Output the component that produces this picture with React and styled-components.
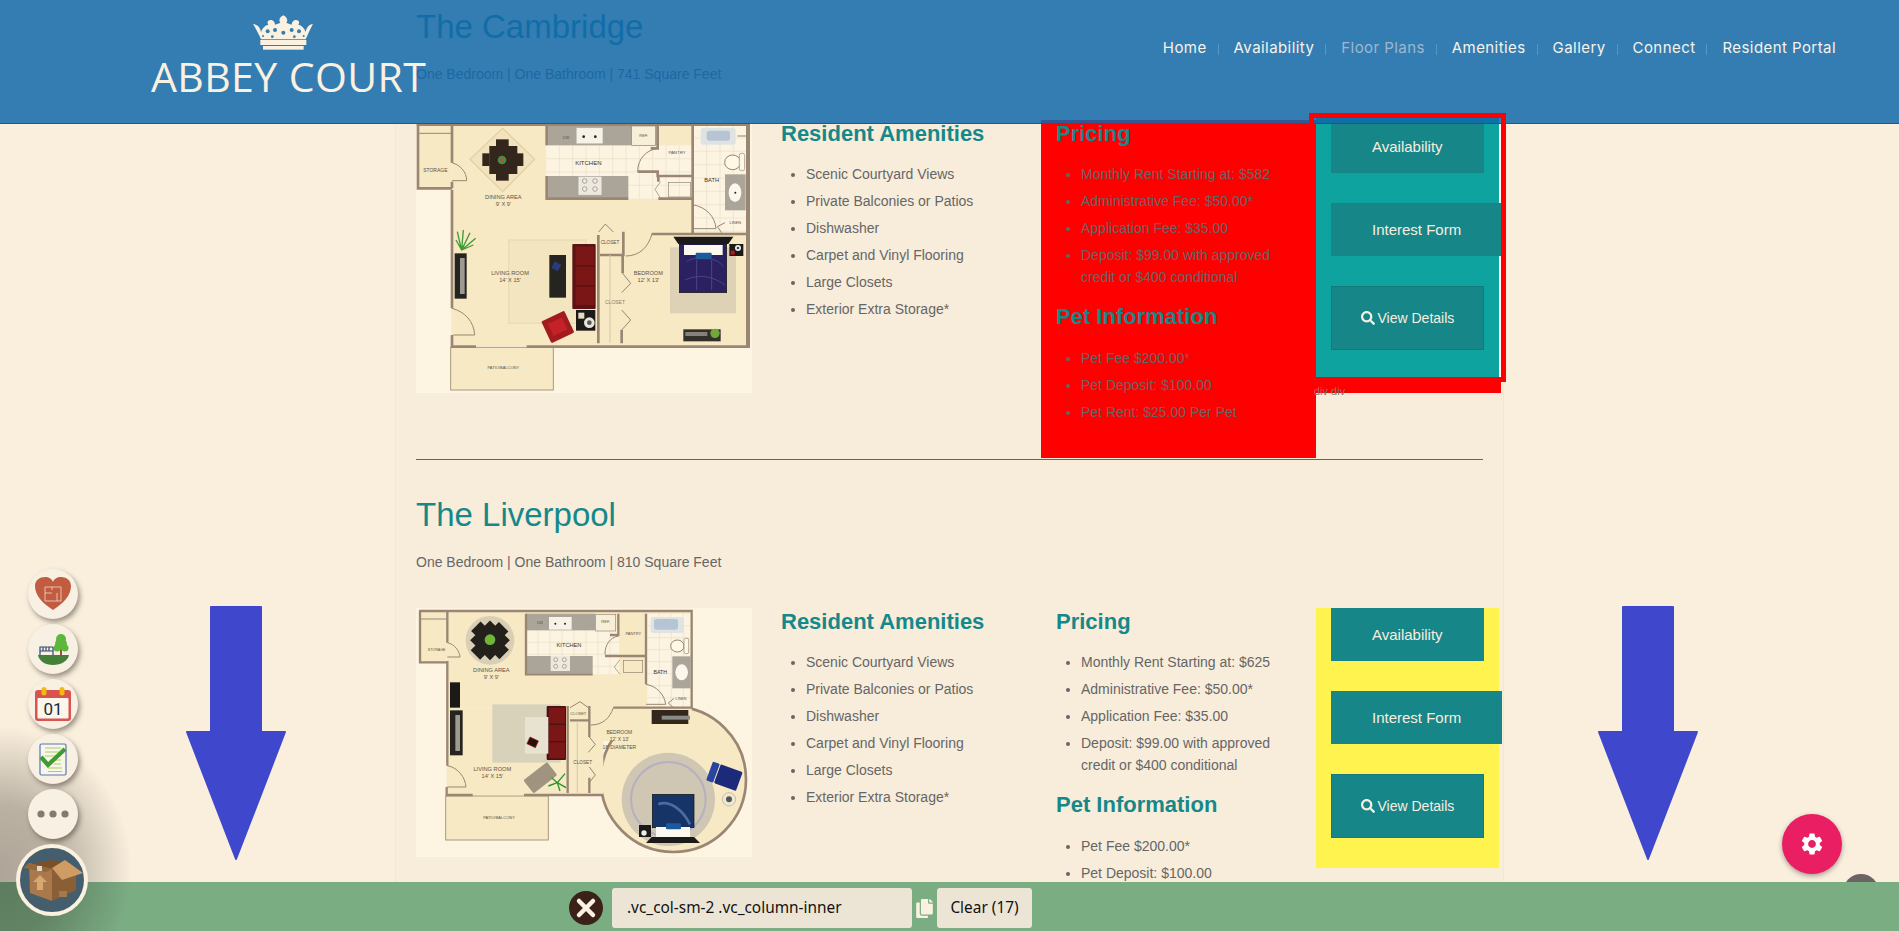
import React from 'react';
import styled, { createGlobalStyle } from 'styled-components';
import { FaSearch, FaCopy } from 'react-icons/fa';
import { MdSettings } from 'react-icons/md';

const Global = createGlobalStyle`
  html, body { margin: 0; padding: 0; height: 100%; overflow: hidden; background: #faefdd; }
  * { box-sizing: border-box; }
  body { font-family: "Liberation Sans", Arial, sans-serif; color: #666; }
`;

const Page = styled.div`position: relative; width: 1899px; height: 931px; overflow: hidden;`;

const Header = styled.header`
  position: absolute; top: 0; left: 0; right: 0; height: 124px; z-index: 5;
  background: rgba(16, 104, 171, 0.85);
  border-bottom: 1px solid rgba(10, 90, 160, 0.9);
  display: flex; justify-content: space-between; align-items: flex-start;
  padding: 15px 63px 0 151px;
`;
const Logo = styled.a`display: flex; flex-direction: column; align-items: flex-start;`;
const Crown = styled.svg`width: 60px; height: 35px; margin-left: 102px; display: block;`;
const LogoText = styled.span`
  font-family: "Open Sans", sans-serif; font-size: 41px; font-weight: 500; line-height: 44px; margin-top: 4px;
  color: #faf1e0; white-space: nowrap; letter-spacing: 0.4px;
`;
const Nav = styled.nav`display: flex; align-items: center; padding-top: 22px;`;
const NavLink = styled.a`
  font-family: "Inter", sans-serif; font-size: 15px; line-height: 22px; white-space: nowrap;
  letter-spacing: 0.43px;
  color: ${p => (p.$active ? '#9db8cf' : '#f7f3ea')};
`;
const NavSep = styled.i`display: block; width: 1px; height: 11px; margin: 2px 15px 0 11px; background: rgba(255,255,255,.18);`;

const Content = styled.main`
  margin-left: 395px; width: 1109px; height: 931px; padding: 7px 0 0 5px;
  background: #f8eddb; border-left: 1px solid #f3e7d4; border-right: 1px solid #f3e7d4;
`;
const Section = styled.section``;
const Title = styled.h2`margin: 0 0 16px 15px; font-size: 33px; line-height: 40px; font-weight: 400; color: #15888a;`;
const Sub = styled.p`margin: 0 0 35px 15px; font-size: 14px; line-height: 22px; color: #666;`;
const Row = styled.div`display: grid; grid-template-columns: 365px 275px 275px 183px; align-items: stretch;`;
const PlanCol = styled.div`padding-left: 15px;`;
const TextCol = styled.div`padding: 0 15px 30px 15px; background: ${p => p.$bg || 'transparent'};`;
const Heading = styled.h3`
  margin: ${p => (p.$next ? '15px 0 16px' : '0 0 15px')}; font-size: 22px; line-height: 28px; font-weight: 700; color: #15888a;
`;
const List = styled.ul`margin: 0; padding: 0 0 0 25px;`;
const Item = styled.li`font-size: 14px; line-height: 22px; margin-bottom: 5px; color: #666;`;
const Rule = styled.hr`margin: 1px 20px 35px 15px; border: 0; height: 1px; background: #15888a;`;

const RedFrame = styled.div`
  position: relative; align-self: start; margin-top: -2px; width: 185px; background: #ff0000; padding-bottom: 11px;
`;
const WhiteEdge = styled.div`background: #fff; padding: 0 2px 2px 0;`;
const ButtonStack = styled.div`
  display: flex; flex-direction: column; align-items: flex-start; gap: 30px;
  align-self: start; background: ${p => p.$bg}; padding: ${p => p.$top || 0}px 0 30px 15px;
`;
const Button = styled.a`
  display: flex; align-items: center; justify-content: center; gap: 3px; flex: none; white-space: nowrap;
  height: ${p => (p.$tall ? 64 : 53)}px; padding: 0 ${p => (p.$tall ? 28.5 : 41)}px;
  background: #168688; color: #f8eee0; font-size: ${p => (p.$tall ? 14 : 15)}px;
  border: ${p => (p.$tall ? '1px solid #137a7c' : '0')};
`;
const DivLabel = styled.span`position: absolute; left: -2px; bottom: -5px; font-size: 11px; line-height: 13px; color: #777;`;
const Outline = styled.div`
  position: absolute; left: 1309px; top: 113px; width: 197px; height: 269px; border: 5px solid #ff0000; z-index: 6; pointer-events: none;
`;
const PlanSvg = styled.svg`display: block; width: 336px;`;

const ArrowSvg = styled.svg`position: absolute; top: 606px; left: ${p => p.$left}px; width: 100px; height: 254px; z-index: 3;`;

const Shade = styled.div`
  position: absolute; left: 0; bottom: 0; width: 135px; height: 205px; z-index: 8;
  background: radial-gradient(132px 145px at 0 145px, rgba(40,35,30,.36), rgba(40,35,30,.3) 45%, rgba(40,35,30,0) 100%);
`;
const Dock = styled.div`
  position: absolute; left: 28px; top: 569px; z-index: 9; display: flex; flex-direction: column; gap: 5px;
`;
const DockBtn = styled.div`
  width: 50px; height: 50px; border-radius: 50%; background: #f7f0e3; box-shadow: 2px 3px 5px rgba(60,50,40,.5);
  svg { display: block; width: 50px; height: 50px; }
`;
const BoxBtn = styled.div`
  position: absolute; left: 16px; top: 844px; width: 72px; height: 72px; border-radius: 50%; z-index: 9;
  background: #455e6e; border: 4px solid #faf1e0; overflow: hidden;
  svg { display: block; width: 64px; height: 64px; }
`;
const Fab = styled.div`
  position: absolute; left: 1782px; top: 814px; width: 60px; height: 60px; border-radius: 50%; z-index: 9;
  background: #e91e63; color: #fff; display: flex; align-items: center; justify-content: center;
  box-shadow: 0 2px 5px rgba(0,0,0,.35);
`;
const TopBtn = styled.div`
  position: absolute; left: 1843px; top: 874px; width: 36px; height: 36px; border-radius: 50%; background: #6a6464; z-index: 6;
`;
const Bar = styled.div`
  position: absolute; left: 0; right: 0; bottom: 0; height: 49px; background: #7bad83; z-index: 7;
  display: flex; align-items: center; padding: 6px 0 3px 569px;
`;
const CloseBtn = styled.span`width: 34px; height: 34px; margin-right: 9px; border-radius: 50%; background: #3a2219; flex: none;
  svg { display: block; width: 34px; height: 34px; }`;
const Selector = styled.div`
  width: 300px; height: 40px; background: #ece5d5; border-radius: 3px; padding-left: 15px; color: #111;
  font-family: "Noto Sans", sans-serif; font-size: 15.4px; line-height: 40px;
`;
const CopyIcon = styled.span`width: 25px; display: flex; justify-content: center; color: #faf1e0; font-size: 19px;`;
const ClearBtn = styled.div`
  width: 95px; height: 40px; background: #ece5d5; border-radius: 3px; text-align: center; color: #111;
  font-family: "Noto Sans", sans-serif; font-size: 15.4px; line-height: 40px;
`;

const L = ({ x, y, s = 14, c = '#5e5344', a = 'middle', children }) => (
  <text x={x} y={y} fontSize={s} fill={c} textAnchor={a} fontFamily="Liberation Sans, sans-serif">{children}</text>
);

const WALL = '#9a8672';
const FLOOR = '#f6e9c4';
const TILE = '#fcf4e1';
const GRANITE = '#aaa598';

const Grid = ({ x, y, w, h, step = 40 }) => {
  const lines = [];
  for (let i = x + step; i < x + w; i += step) lines.push(<line key={'v' + i} x1={i} y1={y} x2={i} y2={y + h} />);
  for (let j = y + step; j < y + h; j += step) lines.push(<line key={'h' + j} x1={x} y1={j} x2={x + w} y2={j} />);
  return <g stroke="#e8dfc8" strokeWidth="2">{lines}</g>;
};

const Cambridge = () => (
  <PlanSvg viewBox="18 0 1008 819" height="273">
    <rect x="18" y="0" width="1008" height="819" fill="#fef4e2" />
    <rect x="24" y="14" width="100" height="192" fill={FLOOR} />
    <rect x="124" y="12" width="892" height="666" fill={FLOOR} />
    <rect x="122" y="682" width="308" height="128" fill={FLOOR} stroke="#a89a7c" strokeWidth="3" />
    <L x={280} y={748} s={12}>PATIO/BALCONY</L>
    <rect x="408" y="76" width="440" height="160" fill={TILE} />
    <Grid x={408} y={76} w={440} h={160} />
    <rect x="850" y="14" width="160" height="322" fill={TILE} />
    <Grid x={850} y={14} w={160} h={322} />
    <rect x="410" y="14" width="330" height="62" fill={GRANITE} />
    <rect x="500" y="24" width="78" height="46" fill="#f6f2e6" stroke="#ddd" />
    <circle cx="521" cy="50" r="4" fill="#222" /><circle cx="556" cy="50" r="4" fill="#222" />
    <L x={468} y={56} s={12}>DW</L>
    <rect x="665" y="18" width="72" height="58" fill="#f8efd8" stroke={WALL} strokeWidth="2" />
    <L x={701} y={50} s={12}>REF.</L>
    <L x={535} y={136} s={18} c="#3c3327">KITCHEN</L>
    <L x={801} y={101} s={13}>PANTRY</L>
    <rect x="410" y="168" width="245" height="66" fill={GRANITE} />
    <rect x="505" y="170" width="70" height="55" fill="#eee9dc" stroke="#bbb" />
    <g fill="none" stroke="#888" strokeWidth="2"><circle cx="524" cy="183" r="7" /><circle cx="555" cy="183" r="7" /><circle cx="524" cy="207" r="7" /><circle cx="555" cy="207" r="7" /></g>
    <rect x="775" y="187" width="66" height="44" fill="none" stroke="#8f8270" strokeWidth="2" />
    <path d="M752 185L735 208L752 236" fill="none" stroke="#8f8270" strokeWidth="2" />
    <g fill="none" stroke={WALL} strokeWidth="8">
      <path d="M24 10V205H126" />
      <path d="M20 14H1016V680H350" />
      <path d="M126 14V128M126 185V205M126 210V565M126 645V680H198" />
      <path d="M410 14V76M410 168V236H655" />
      <path d="M743 14V85H722M683 155H743V168H848M848 14V340" />
      <path d="M745 168V185M745 236H848" />
      <path d="M1012 14V680" />
      <path d="M725 342H1016M640 335V408M570 405H640M565 345V670M635 630V670M638 405V460" />
    </g>
    <path d="M24 40H124" stroke={WALL} strokeWidth="3" />
    <path d="M600 405V668" stroke="#d6c7a6" strokeWidth="3" />
    <g fill="none" stroke={WALL} strokeWidth="3">
      <path d="M126 128C150 135 170 155 170 182H126" />
      <path d="M683 155C683 115 710 90 743 85" />
      <path d="M848 254C890 262 915 290 918 326H848" />
      <path d="M647 408C690 408 715 380 726 342" />
      <path d="M126 565C165 575 192 605 194 645H130" />
      <path d="M566 336L586 312L610 336" />
      <path d="M638 460L662 490L635 518M635 570L662 600L635 630" />
      <path d="M945 308L922 320L935 338" />
    </g>
    <L x={76} y={157} s={15}>STORAGE</L>
    <L x={905} y={186} s={17} c="#3c3327">BATH</L>
    <L x={976} y={312} s={12}>LINEN</L>
    <L x={600} y={373} s={14}>CLOSET</L>
    <L x={615} y={552} s={15} c="#8f8270">CLOSET</L>
    <rect x="872" y="24" width="105" height="50" rx="8" fill="#dfe3e3" />
    <rect x="890" y="32" width="70" height="30" rx="8" fill="#b7c4d3" />
    <path d="M982 48H1008" stroke="#8f8270" strokeWidth="3" />
    <ellipse cx="968" cy="127" rx="24" ry="22" fill="#fff8e6" stroke="#8f8270" strokeWidth="3" />
    <rect x="988" y="100" width="16" height="52" rx="6" fill="#fff8e6" stroke="#8f8270" strokeWidth="2" />
    <rect x="945" y="163" width="62" height="108" fill={GRANITE} />
    <ellipse cx="975" cy="218" rx="19" ry="28" fill="#fbf7ec" />
    <circle cx="976" cy="218" r="3" fill="#222" />
    <polygon points="278,25 374,118 278,215 180,118" fill="#f3e3bc" stroke="#e2d1a8" strokeWidth="4" />
    <g fill="#33261c">
      <rect x="238" y="78" width="84" height="84" />
      <rect x="258" y="58" width="38" height="22" /><rect x="258" y="160" width="38" height="22" />
      <rect x="217" y="100" width="22" height="38" /><rect x="320" y="100" width="20" height="38" />
    </g>
    <circle cx="276" cy="120" r="13" fill="#3f8f4a" /><circle cx="276" cy="120" r="6" fill="#c5502e" />
    <L x={280} y={238} s={17}>DINING AREA</L>
    <L x={280} y={259} s={17}>9' X 9'</L>
    <rect x="296" y="360" width="232" height="250" fill="#f3e5bf" stroke="#eadcb6" strokeWidth="4" />
    <L x={300} y={465} s={17}>LIVING ROOM</L>
    <L x={300} y={487} s={17}>14' X 15'</L>
    <rect x="487" y="372" width="70" height="195" rx="3" fill="#5c1212" />
    <g fill="#7b1616"><rect x="497" y="380" width="56" height="55" /><rect x="497" y="440" width="56" height="55" /><rect x="497" y="500" width="56" height="55" /></g>
    <rect x="418" y="405" width="50" height="128" fill="#25241f" />
    <rect x="428" y="428" width="22" height="22" fill="#2b3a80" transform="rotate(30 439 439)" />
    <rect x="134" y="400" width="36" height="136" fill="#26241f" />
    <rect x="150" y="414" width="14" height="108" fill="#9c9a92" />
    <g stroke="#3f9a35" strokeWidth="4" fill="none">
      <path d="M155 392L142 335M155 390L160 330M155 390L180 338M155 390L197 355M155 390L138 360M155 390L190 375" />
    </g>
    <g transform="rotate(-25 443 620)">
      <rect x="405" y="585" width="76" height="72" rx="4" fill="#a31a1f" />
      <rect x="420" y="600" width="46" height="40" fill="#c32328" />
    </g>
    <rect x="498" y="570" width="58" height="62" fill="#1b1a17" />
    <circle cx="538" cy="608" r="16" fill="#e8e4d8" /><circle cx="538" cy="608" r="7" fill="#555" />
    <rect x="505" y="578" width="18" height="18" fill="#e8dcc0" />
    <L x={715} y={465} s={17}>BEDROOM</L>
    <L x={715} y={487} s={17}>12' X 13'</L>
    <rect x="780" y="382" width="198" height="198" fill="#ddd2b6" />
    <rect x="808" y="372" width="142" height="146" fill="#2b2160" stroke="#111" strokeWidth="2" />
    <path d="M830 425C860 405 920 410 940 440M825 480C870 460 910 470 945 495M860 420V510M905 420V510" stroke="#4c438a" strokeWidth="3" fill="none" />
    <polygon points="790,350 970,350 955,372 805,372" fill="#1c1a18" />
    <rect x="822" y="375" width="116" height="30" fill="#fbf8ef" />
    <rect x="857" y="398" width="48" height="20" rx="3" fill="#1d5a9c" />
    <rect x="958" y="372" width="42" height="36" fill="#1b1a17" />
    <circle cx="984" cy="384" r="9" fill="#eee" /><circle cx="984" cy="384" r="4" fill="#444" />
    <rect x="962" y="392" width="12" height="12" fill="#c0121c" />
    <rect x="820" y="628" width="112" height="36" fill="#33302a" />
    <rect x="826" y="636" width="66" height="12" fill="#85827a" />
    <circle cx="915" cy="640" r="14" fill="#6fa83a" />
  </PlanSvg>
);

const Liverpool = () => (
  <PlanSvg viewBox="48 51 1008 747" height="249">
    <rect x="48" y="51" width="1008" height="747" fill="#fef4e2" />
    <circle cx="820" cy="565" r="218" fill={FLOOR} stroke={WALL} strokeWidth="8" />
    <rect x="60" y="62" width="80" height="152" fill={FLOOR} />
    <rect x="140" y="62" width="735" height="288" fill={FLOOR} />
    <rect x="140" y="350" width="470" height="262" fill={FLOOR} />
    <rect x="590" y="350" width="285" height="100" fill={FLOOR} />
    <rect x="137" y="615" width="308" height="132" fill={FLOOR} stroke="#a89a7c" strokeWidth="3" />
    <L x={297} y={683} s={12}>PATIO/BALCONY</L>
    <rect x="378" y="118" width="280" height="132" fill={TILE} />
    <Grid x={378} y={118} w={280} h={132} step={36} />
    <rect x="742" y="68" width="130" height="280" fill={TILE} />
    <Grid x={742} y={68} w={130} h={280} step={36} />
    <rect x="378" y="68" width="207" height="50" fill={GRANITE} />
    <rect x="447" y="78" width="68" height="38" fill="#f6f2e6" />
    <circle cx="466" cy="98" r="3" fill="#222" /><circle cx="495" cy="98" r="3" fill="#222" />
    <L x={420} y={100} s={11}>DW</L>
    <rect x="587" y="70" width="60" height="50" fill="#f8efd8" stroke={WALL} strokeWidth="2" />
    <L x={617} y={97} s={12}>REF.</L>
    <L x={507} y={169} s={17} c="#3c3327">KITCHEN</L>
    <L x={700} y={133} s={12}>PANTRY</L>
    <rect x="378" y="195" width="200" height="52" fill={GRANITE} />
    <rect x="452" y="195" width="58" height="45" fill="#eee9dc" />
    <g fill="none" stroke="#888" strokeWidth="2"><circle cx="467" cy="206" r="6" /><circle cx="493" cy="206" r="6" /><circle cx="467" cy="226" r="6" /><circle cx="493" cy="226" r="6" /></g>
    <rect x="670" y="208" width="58" height="36" fill="none" stroke="#8f8270" strokeWidth="2" />
    <path d="M660 206L643 228L660 250" fill="none" stroke="#8f8270" strokeWidth="2" />
    <g fill="none" stroke={WALL} strokeWidth="7">
      <path d="M60 58V214H142" />
      <path d="M58 60H875V350H640" />
      <path d="M142 60V155M142 210V524M140 588V612H218" />
      <path d="M378 68V250H578" />
      <path d="M655 68V132H630M615 195H738M738 68V280M655 195V195" />
      <path d="M372 612H610" />
      <path d="M503 345V606M510 388H568M568 345V438M568 560V606" />
    </g>
    <path d="M60 84H140" stroke={WALL} strokeWidth="3" />
    <path d="M532 390V605" stroke="#d6c7a6" strokeWidth="3" />
    <g fill="none" stroke={WALL} strokeWidth="3">
      <path d="M142 155C165 160 178 180 180 198H142" />
      <path d="M615 190C615 160 630 140 655 135" />
      <path d="M738 280C770 285 793 310 797 340H738" />
      <path d="M572 402C610 402 630 380 640 350" />
      <path d="M142 524C175 530 196 560 198 588H142" />
      <path d="M510 350L540 332L565 350" />
      <path d="M568 438L586 460L565 484M568 528L586 552L565 578" />
      <path d="M822 322L805 336L820 350" />
    </g>
    <L x={110} y={180} s={11}>STORAGE</L>
    <L x={781} y={249} s={16} c="#3c3327">BATH</L>
    <L x={843} y={328} s={11}>LINEN</L>
    <L x={535} y={372} s={12}>CLOSET</L>
    <L x={548} y={518} s={14}>CLOSET</L>
    <rect x="752" y="78" width="100" height="48" rx="8" fill="#dfe3e3" />
    <rect x="762" y="84" width="72" height="32" rx="8" fill="#b7c4d3" />
    <ellipse cx="832" cy="165" rx="20" ry="18" fill="#fff8e6" stroke="#8f8270" strokeWidth="3" />
    <rect x="852" y="142" width="14" height="46" rx="5" fill="#fff8e6" stroke="#8f8270" strokeWidth="2" />
    <rect x="817" y="196" width="55" height="96" fill={GRANITE} />
    <ellipse cx="845" cy="244" rx="19" ry="24" fill="#fbf7ec" />
    <circle cx="270" cy="148" r="73" fill="#d9cfb5" />
    <g fill="#24211c" transform="rotate(45 270 148)">
      <rect x="228" y="106" width="84" height="84" />
      <rect x="250" y="90" width="40" height="120" />
      <rect x="210" y="128" width="120" height="40" />
    </g>
    <circle cx="270" cy="146" r="16" fill="#6fb53a" />
    <L x={274} y={242} s={17}>DINING AREA</L>
    <L x={274} y={263} s={17}>9' X 9'</L>
    <rect x="277" y="340" width="205" height="175" fill="#d9d2bb" />
    <rect x="440" y="345" width="58" height="162" rx="3" fill="#4d1010" />
    <g fill="#7b1616"><rect x="447" y="350" width="48" height="48" /><rect x="447" y="402" width="48" height="48" /><rect x="447" y="454" width="48" height="48" /></g>
    <rect x="375" y="378" width="70" height="110" fill="#e8e2d0" />
    <rect x="384" y="443" width="28" height="22" fill="#22140f" stroke="#b4141c" strokeWidth="2" transform="rotate(25 398 454)" />
    <rect x="150" y="358" width="38" height="135" fill="#26241f" />
    <rect x="166" y="372" width="14" height="108" fill="#9c9a92" />
    <rect x="150" y="274" width="30" height="76" fill="#1b1a17" />
    <L x={277} y={539} s={17}>LIVING ROOM</L>
    <L x={277} y={561} s={17}>14' X 15'</L>
    <rect x="376" y="535" width="90" height="50" rx="5" fill="#a09480" transform="rotate(-38 421 560)" />
    <g stroke="#27952f" strokeWidth="4" fill="none"><path d="M472 575L495 548M472 575L498 590M472 575L445 585M472 575L480 600M472 575L455 560" /></g>
    <circle cx="805" cy="625" r="140" fill="#cfc6b4" />
    <circle cx="805" cy="625" r="112" fill="none" stroke="#b8afc0" strokeWidth="6" />
    <L x={658} y={429} s={15}>BEDROOM</L>
    <L x={658} y={451} s={15}>12' X 13'</L>
    <L x={658} y={473} s={15}>16' DIAMETER</L>
    <rect x="757" y="610" width="125" height="100" fill="#163466" stroke="#111" strokeWidth="2" />
    <path d="M775 640C810 625 850 660 870 700" stroke="#4c6aa4" strokeWidth="8" fill="none" />
    <rect x="768" y="708" width="102" height="30" fill="#fbf8ef" />
    <rect x="798" y="697" width="45" height="18" rx="3" fill="#1d5a9c" />
    <polygon points="755,738 882,738 900,756 738,756" fill="#1c1a18" />
    <rect x="717" y="702" width="36" height="36" fill="#1b1a17" /><circle cx="732" cy="726" r="8" fill="#eee" />
    <rect x="755" y="357" width="110" height="42" fill="#33261c" />
    <rect x="785" y="374" width="85" height="12" fill="#8a8a86" />
    <g transform="rotate(20 985 560)">
      <rect x="950" y="530" width="70" height="60" rx="4" fill="#1c2a7a" />
      <rect x="925" y="530" width="22" height="60" rx="4" fill="#2a45a0" />
    </g>
    <circle cx="987" cy="625" r="20" fill="#eee7d2" stroke="#b5aa92" strokeWidth="2" /><circle cx="987" cy="625" r="9" fill="#555" />
  </PlanSvg>
);

const sections = [
  {
    name: 'The Cambridge', sub: 'One Bedroom | One Bathroom | 741 Square Feet', rent: '$582',
    Plan: Cambridge,
  },
  {
    name: 'The Liverpool', sub: 'One Bedroom | One Bathroom | 810 Square Feet', rent: '$625',
    Plan: Liverpool,
  },
];
const amenities = ['Scenic Courtyard Views', 'Private Balconies or Patios', 'Dishwasher', 'Carpet and Vinyl Flooring', 'Large Closets', 'Exterior Extra Storage*'];
const pets = ['Pet Fee $200.00*', 'Pet Deposit: $100.00', 'Pet Rent: $25.00 Per Pet'];
const navItems = ['Home', 'Availability', 'Floor Plans', 'Amenities', 'Gallery', 'Connect', 'Resident Portal'];

const Buttons = ({ bg, top }) => (
  <ButtonStack $bg={bg} $top={top}>
    <Button>Availability</Button>
    <Button>Interest Form</Button>
    <Button $tall><FaSearch size={14} />View Details</Button>
  </ButtonStack>
);

const Property = ({ data, index }) => {
  const { Plan } = data;
  return (
    <Section>
      <Title>{data.name}</Title>
      <Sub>{data.sub}</Sub>
      <Row>
        <PlanCol><Plan /></PlanCol>
        <TextCol>
          <Heading>Resident Amenities</Heading>
          <List>{amenities.map(a => <Item key={a}>{a}</Item>)}</List>
        </TextCol>
        <TextCol $bg={index === 0 ? '#ff0000' : undefined}>
          <Heading>Pricing</Heading>
          <List>
            <Item>Monthly Rent Starting at: {data.rent}</Item>
            <Item>Administrative Fee: $50.00*</Item>
            <Item>Application Fee: $35.00</Item>
            <Item>Deposit: $99.00 with approved credit or $400 conditional</Item>
          </List>
          <Heading $next>Pet Information</Heading>
          <List>{pets.map(a => <Item key={a}>{a}</Item>)}</List>
        </TextCol>
        {index === 0 ? (
          <RedFrame>
            <WhiteEdge><Buttons bg="#0fa3a0" top={2} /></WhiteEdge>
            <DivLabel>div div</DivLabel>
          </RedFrame>
        ) : (
          <Buttons bg="#fff44f" />
        )}
      </Row>
      {index === 0 && <Rule />}
    </Section>
  );
};

export default function App() {
  return (
    <Page>
      <Global />
      <Header>
        <Logo>
          <Crown viewBox="0 0 180 103">
            <g fill="#faf1e0">
              <rect x="30" y="92" width="122" height="11" />
              <rect x="22" y="74" width="138" height="15" />
              <path d="M0 25C14 28 22 36 24 50C28 38 36 30 46 28C40 20 46 12 56 14C62 16 66 22 66 28C72 26 78 24 82 22C76 14 80 6 91 0C102 6 106 14 100 22C104 24 110 26 116 28C116 22 120 16 126 14C136 12 142 20 136 28C146 30 154 38 158 50C160 36 168 28 180 25C172 40 164 58 158 72H24C18 58 8 40 0 25Z" />
            </g>
            <g fill="#337cb2">
              <circle cx="44" cy="48" r="6" /><circle cx="66" cy="44" r="6" /><circle cx="116" cy="44" r="6" /><circle cx="138" cy="48" r="6" />
              <circle cx="91" cy="52" r="6" /><circle cx="30" cy="62" r="3" /><circle cx="152" cy="62" r="3" /><circle cx="58" cy="64" r="4" /><circle cx="124" cy="64" r="4" />
            </g>
          </Crown>
          <LogoText>ABBEY COURT</LogoText>
        </Logo>
        <Nav>
          {navItems.map((n, i) => (
            <React.Fragment key={n}>
              <NavLink $active={n === 'Floor Plans'}>{n}</NavLink>
              {i < navItems.length - 1 && <NavSep />}
            </React.Fragment>
          ))}
        </Nav>
      </Header>
      <Outline />

      <Content>
        {sections.map((s, i) => <Property key={s.name} data={s} index={i} />)}
      </Content>

      <ArrowSvg $left={186} viewBox="0 0 100 254"><path d="M25 1H75V126H99L50 253L1 126H25Z" fill="#3f48cc" stroke="#3f48cc" strokeWidth="2" strokeLinejoin="round" /></ArrowSvg>
      <ArrowSvg $left={1598} viewBox="0 0 100 254"><path d="M25 1H75V126H99L50 253L1 126H25Z" fill="#3f48cc" stroke="#3f48cc" strokeWidth="2" strokeLinejoin="round" /></ArrowSvg>

      <Shade />
      <Dock>
        <DockBtn>
          <svg viewBox="0 0 50 50">
            <path d="M25 41C14 34 7 26 7 17C7 11 12 8 17 8C21 8 24 10 25 13C26 10 29 8 33 8C38 8 43 11 43 17C43 26 36 34 25 41Z" fill="#c25c40" />
            <path d="M17 18H33V32H17ZM17 24H24M29 24V32M24 18V21" fill="none" stroke="#f2d9c8" strokeWidth="0.8" />
          </svg>
        </DockBtn>
        <DockBtn>
          <svg viewBox="0 0 50 50">
            <path d="M10 31H41C40 37 33 41 25 41C17 41 11 37 10 31Z" fill="#44803a" />
            <rect x="32" y="24" width="2" height="8" fill="#8a5a2b" />
            <g fill="#5cb83c"><circle cx="33" cy="15" r="5" /><circle cx="33" cy="20" r="6" /><circle cx="29" cy="24" r="3.5" /><circle cx="37" cy="24" r="3.5" /></g>
            <path d="M11.5 23H25M11.5 27H25M12 23V31M25 23V31M15 23V27M18 23V27M21 23V27" stroke="#2f4a70" strokeWidth="1.2" fill="none" />
          </svg>
        </DockBtn>
        <DockBtn>
          <svg viewBox="0 0 50 50">
            <rect x="7" y="11" width="36" height="31" rx="3" fill="#d9534f" />
            <rect x="9.5" y="19" width="31" height="20.5" rx="1" fill="#faf6ec" />
            <rect x="13.5" y="8" width="5" height="8.5" rx="2.5" fill="#f5b914" />
            <rect x="31.5" y="8" width="5" height="8.5" rx="2.5" fill="#f5b914" />
            <text x="25" y="36" textAnchor="middle" fontSize="17" fontFamily="Roboto, sans-serif" fill="#1d2a3a">01</text>
          </svg>
        </DockBtn>
        <DockBtn>
          <svg viewBox="0 0 50 50">
            <rect x="12" y="10" width="26" height="31" rx="1.5" fill="#f8f5ea" stroke="#5b75b5" strokeWidth="1.2" />
            <path d="M17 14H33M17 18H31M17 22H33M22 26H33M26 30H33M20 34H34M20 37.5H34" stroke="#a8d060" strokeWidth="1.1" />
            <path d="M13 23L20 31L37 15" fill="none" stroke="#3f9a2f" strokeWidth="4.2" />
          </svg>
        </DockBtn>
        <DockBtn>
          <svg viewBox="0 0 50 50"><g fill="#857a6e"><circle cx="13" cy="25" r="3.6" /><circle cx="25" cy="25" r="3.6" /><circle cx="37" cy="25" r="3.6" /></g></svg>
        </DockBtn>
      </Dock>
      <BoxBtn>
        <svg viewBox="4 4 64 64">
          <polygon points="7,24 36,16 50,20 30,30" fill="#6f4720" />
          <polygon points="14,20 36,16 58,22 36,30" fill="#7a5028" />
          <polygon points="13,19 36,25 36,57 14,49" fill="#a9794b" />
          <polygon points="36,25 60,27 60,46 36,57" fill="#8a5f35" />
          <polygon points="36,24 49,16 67,29 46,36" fill="#cf9c63" />
          <polygon points="7,24 13,19 36,25 30,28" fill="#93683a" />
          <path d="M24 31L31 38H27V46H21V38H17Z" fill="#d9a871" />
          <rect x="21" y="22" width="5" height="5" fill="#ded8cc" />
          <rect x="43" y="47" width="8" height="6" fill="#a57a4a" />
        </svg>
      </BoxBtn>

      <Fab><MdSettings size={26} /></Fab>
      <TopBtn />

      <Bar>
        <CloseBtn>
          <svg viewBox="0 0 34 34"><path d="M10 10L24 24M24 10L10 24" stroke="#faf1e0" strokeWidth="4.5" strokeLinecap="round" /></svg>
        </CloseBtn>
        <Selector>.vc_col-sm-2 .vc_column-inner</Selector>
        <CopyIcon><FaCopy /></CopyIcon>
        <ClearBtn>Clear (17)</ClearBtn>
      </Bar>
    </Page>
  );
}
